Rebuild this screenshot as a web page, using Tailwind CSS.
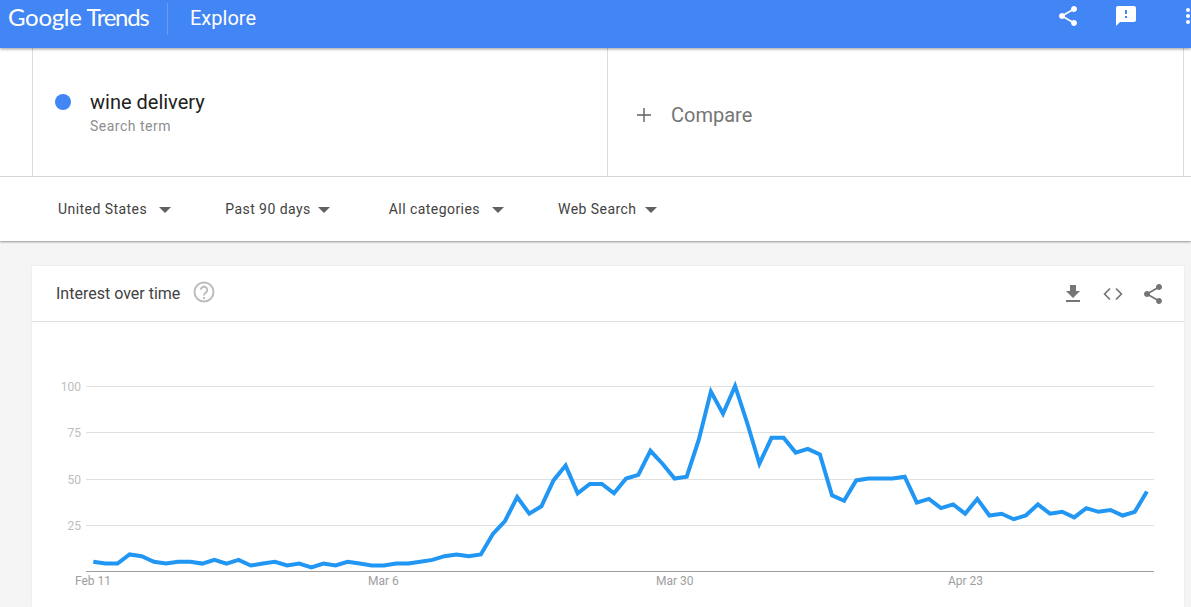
<!DOCTYPE html>
<html>
<head>
<meta charset="utf-8">
<script src="https://cdn.jsdelivr.net/npm/@tailwindcss/browser@4"></script>
</head>
<body class="m-0 overflow-hidden">
<div class="w-[1191px] h-[607px] overflow-hidden flex flex-col bg-[#f5f5f5] font-['Roboto',sans-serif] text-[#212121]">
  <header class="relative z-20 h-12 shrink-0 bg-[#4285f4] shadow-[0_1px_3px_rgba(0,0,0,0.4)] flex items-start text-white">
    <div class="ml-2 w-[159px] h-[34px] flex items-center gap-[5px] text-[24px] leading-none font-['Lato',sans-serif] tracking-[-0.3px]">
      <span>Google</span><span class="tracking-[-1.3px]">Trends</span>
    </div>
    <div class="w-px h-[32px] mt-[3px] bg-white/20"></div>
    <div class="ml-[22px] h-9 flex items-center text-[20px] font-normal">Explore</div>
    <div class="ml-auto flex items-start mr-[-9px]">
      <svg class="w-6 h-6 mt-[4px]" viewBox="0 0 24 24" fill="#fff"><path d="M18 16.08c-.76 0-1.44.3-1.96.77L8.91 12.7c.05-.23.09-.46.09-.7s-.04-.47-.09-.7l7.05-4.11c.54.5 1.25.81 2.04.81 1.66 0 3-1.34 3-3s-1.34-3-3-3-3 1.34-3 3c0 .24.04.47.09.7L8.04 9.81C7.5 9.31 6.79 9 6 9c-1.66 0-3 1.34-3 3s1.34 3 3 3c.79 0 1.5-.31 2.04-.81l7.12 4.16c-.05.21-.08.43-.08.65 0 1.61 1.31 2.92 2.92 2.92s2.92-1.31 2.92-2.92-1.31-2.92-2.92-2.92z"/></svg>
      <svg class="w-6 h-6 mt-[4px] ml-[34px]" viewBox="0 0 24 24" fill="#fff"><path d="M20 2H4c-1.1 0-1.99.9-1.99 2L2 22l4-4h14c1.1 0 2-.9 2-2V4c0-1.1-.9-2-2-2zm-7 12h-2v-2h2v2zm0-4h-2V6h2v4z"/></svg>
      <svg class="w-6 h-6 mt-[4px] ml-[38px]" viewBox="0 0 24 24" fill="#fff"><path d="M12 8c1.1 0 2-.9 2-2s-.9-2-2-2-2 .9-2 2 .9 2 2 2zm0 2c-1.1 0-2 .9-2 2s.9 2 2 2 2-.9 2-2-.9-2-2-2zm0 6c-1.1 0-2 .9-2 2s.9 2 2 2 2-.9 2-2-.9-2-2-2z"/></svg>
    </div>
  </header>

  <section class="h-[129px] shrink-0 bg-white border-b border-[#dcdcdc] pl-8 pr-[7px] flex">
    <div class="w-[575px] border-l border-[#dcdcdc] pl-[22px] pt-[42px] flex items-start">
      <span class="w-4 h-4 mt-1 rounded-full bg-[#4285f4]"></span>
      <div class="ml-[19px]">
        <div class="text-[20px] leading-6 text-[#212121]">wine delivery</div>
        <div class="text-[14px] leading-4 mt-[4px] text-[#8e8e8e] tracking-[0.5px]">Search term</div>
      </div>
    </div>
    <div class="flex-1 border-x border-[#dcdcdc] pl-7 flex items-center pt-[6px]">
      <svg class="w-4 h-4" viewBox="0 0 16 16" fill="none" stroke="#616161" stroke-width="1.4"><path d="M8 1v14M1 8h14"/></svg>
      <span class="ml-[19px] text-[20px] font-normal text-[#757575]">Compare</span>
    </div>
  </section>

  <section class="relative z-10 h-[64px] shrink-0 bg-white shadow-[0_1px_2px_rgba(0,0,0,0.4)] flex items-center pt-[1px] text-[14px] text-[#424242] tracking-[0.45px]">
    <div class="ml-[58px] flex items-center"><span>United States</span><span class="ml-3 w-0 h-0 border-x-[6px] border-x-transparent border-t-[6px] border-t-[#616161]"></span></div>
    <div class="ml-[54px] flex items-center"><span>Past 90 days</span><span class="ml-[7px] w-0 h-0 border-x-[6px] border-x-transparent border-t-[6px] border-t-[#616161]"></span></div>
    <div class="ml-[59px] flex items-center"><span>All categories</span><span class="ml-3 w-0 h-0 border-x-[6px] border-x-transparent border-t-[6px] border-t-[#616161]"></span></div>
    <div class="ml-[54px] flex items-center"><span>Web Search</span><span class="ml-2 w-0 h-0 border-x-[6px] border-x-transparent border-t-[6px] border-t-[#616161]"></span></div>
  </section>

  <main class="mt-[25px] ml-8 mr-[7px] flex-1 bg-white shadow-[0_0_2px_rgba(0,0,0,0.08)] flex flex-col">
    <div class="h-[56px] shrink-0 border-b border-[#e0e0e0] flex items-center pl-6 pr-[19px]">
      <span class="text-[16px] text-[#424242]">Interest over time</span>
      <svg class="w-6 h-6 ml-3 mt-[-3px]" viewBox="0 0 24 24" fill="none" stroke="#bdbdbd" stroke-width="2"><circle cx="12" cy="12" r="9.5"/><path d="M8.8 9.8a3.2 3.2 0 1 1 5 2.7c-1.2.8-1.8 1.4-1.8 3"/><path d="M12 17v2"/></svg>
      <div class="ml-auto flex items-center gap-4">
        <svg class="w-6 h-6" viewBox="0 0 24 24" fill="#757575"><path d="M19 9h-4V3H9v6H5l7 7 7-7zM5 18v2h14v-2H5z"/></svg>
        <svg class="w-6 h-6" viewBox="0 0 24 24" fill="none" stroke="#757575" stroke-width="1.7"><path d="M9 6.5 3.6 12l5.4 5.5M15 6.5l5.4 5.5-5.4 5.5"/></svg>
        <svg class="w-6 h-6" viewBox="0 0 24 24" fill="#757575"><path d="M18 16.08c-.76 0-1.44.3-1.96.77L8.91 12.7c.05-.23.09-.46.09-.7s-.04-.47-.09-.7l7.05-4.11c.54.5 1.25.81 2.04.81 1.66 0 3-1.34 3-3s-1.34-3-3-3-3 1.34-3 3c0 .24.04.47.09.7L8.04 9.81C7.5 9.31 6.79 9 6 9c-1.66 0-3 1.34-3 3s1.34 3 3 3c.79 0 1.5-.31 2.04-.81l7.12 4.16c-.05.21-.08.43-.08.65 0 1.61 1.31 2.92 2.92 2.92s2.92-1.31 2.92-2.92-1.31-2.92-2.92-2.92z"/></svg>
      </div>
    </div>
    <svg class="block w-[1152px] h-[285px]" viewBox="32 322 1152 285">
      <g stroke="#e0e0e0" stroke-width="1" shape-rendering="crispEdges">
        <path d="M86 386.5H1154M86 432.5H1154M86 479.5H1154M86 525.5H1154"/>
      </g>
      <path d="M86 571.5H1154" stroke="#9e9e9e" stroke-width="1" shape-rendering="crispEdges"/>
      <g fill="#bdbdbd" font-size="12" text-anchor="end">
        <text x="81" y="390.5">100</text>
        <text x="81" y="437">75</text>
        <text x="81" y="483.5">50</text>
        <text x="81" y="529.5">25</text>
      </g>
      <g fill="#9e9e9e" font-size="12">
        <text x="75" y="585">Feb 11</text>
        <text x="368" y="585">Mar 6</text>
        <text x="656" y="585">Mar 30</text>
        <text x="948" y="585">Apr 23</text>
      </g>
      <polyline fill="none" stroke="#2196f3" stroke-width="4" stroke-linejoin="miter" points="93.3,561.8 105.4,563.6 117.5,563.6 129.6,554.4 141.7,556.2 153.9,561.8 166,563.6 178.1,561.8 190.2,561.8 202.3,563.6 214.4,559.9 226.5,563.6 238.6,559.9 250.7,565.5 262.8,563.6 275,561.8 287.1,565.5 299.2,563.6 311.3,567.3 323.4,563.6 335.5,565.5 347.6,561.8 359.7,563.6 371.8,565.5 383.9,565.5 396.1,563.6 408.2,563.6 420.3,561.8 432.4,559.9 444.5,556.2 456.6,554.4 468.7,556.2 480.8,554.4 492.9,534 505,521 517.2,497 529.3,513.7 541.4,506.3 553.5,480.4 565.6,465.6 577.7,493.3 589.8,484 601.9,484 614,493.3 626.1,478.5 638.3,474.8 650.4,450.8 662.5,463.7 674.6,478.5 686.7,476.7 698.8,439.7 710.9,391.6 723,413.8 735.1,386 747.2,423 759.4,463.7 771.5,437.8 783.6,437.8 795.7,452.6 807.8,448.9 819.9,454.5 832,495.2 844.1,500.7 856.2,480.4 868.3,478.5 880.5,478.5 892.6,478.5 904.7,476.7 916.8,502.6 928.9,498.9 941,508.1 953.1,504.4 965.2,513.7 977.3,498.9 989.4,515.5 1001.6,513.7 1013.7,519.2 1025.8,515.5 1037.9,504.4 1050,513.7 1062.1,511.8 1074.2,517.4 1086.3,508.1 1098.4,511.8 1110.5,510 1122.7,515.5 1134.8,511.8 1146.9,491.5"/>
    </svg>
  </main>
</div>
</body>
</html>
